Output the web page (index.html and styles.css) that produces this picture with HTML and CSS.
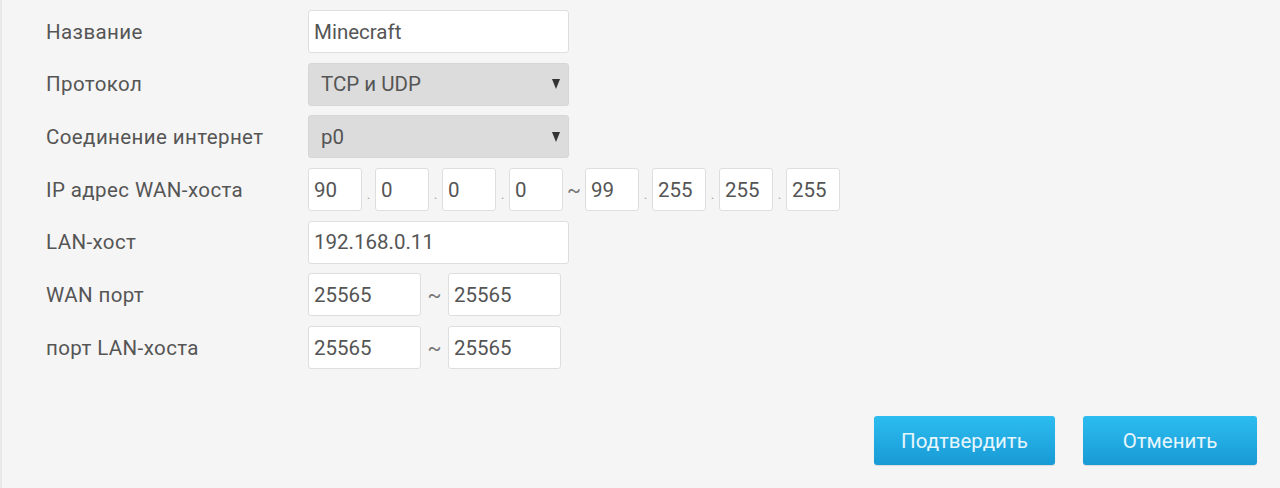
FILE: index.html
```html
<!DOCTYPE html>
<html lang="ru">
<head>
<meta charset="utf-8">
<link rel="stylesheet" href="styles.css">
</head>
<body>
<div class="panel">
  <div class="form">
    <div class="row">
      <div class="label">Название</div>
      <div class="field"><div class="input wide">Minecraft</div></div>
    </div>
    <div class="row">
      <div class="label">Протокол</div>
      <div class="field"><div class="select wide"><span>TCP и UDP</span><span class="arrow"></span></div></div>
    </div>
    <div class="row">
      <div class="label">Соединение интернет</div>
      <div class="field"><div class="select wide"><span>p0</span><span class="arrow"></span></div></div>
    </div>
    <div class="row">
      <div class="label">IP адрес WAN-хоста</div>
      <div class="field ip">
        <div class="input oct">90</div><span class="dot">.</span>
        <div class="input oct">0</div><span class="dot">.</span>
        <div class="input oct">0</div><span class="dot">.</span>
        <div class="input oct">0</div><span class="tilde ip-tilde">~</span>
        <div class="input oct">99</div><span class="dot">.</span>
        <div class="input oct">255</div><span class="dot">.</span>
        <div class="input oct">255</div><span class="dot">.</span>
        <div class="input oct">255</div>
      </div>
    </div>
    <div class="row">
      <div class="label">LAN-хост</div>
      <div class="field"><div class="input wide">192.168.0.11</div></div>
    </div>
    <div class="row">
      <div class="label">WAN порт</div>
      <div class="field">
        <div class="input port">25565</div><span class="tilde">~</span><div class="input port">25565</div>
      </div>
    </div>
    <div class="row">
      <div class="label">порт LAN-хоста</div>
      <div class="field">
        <div class="input port">25565</div><span class="tilde">~</span><div class="input port">25565</div>
      </div>
    </div>
  </div>
  <div class="actions">
    <button class="btn confirm">Подтвердить</button>
    <button class="btn cancel">Отменить</button>
  </div>
</div>
</body>
</html>
```
FILE: styles.css
```css
html, body {
  margin: 0;
  padding: 0;
  background: #f5f5f5;
}
body {
  width: 1280px;
  height: 488px;
  overflow: hidden;
  font-family: Roboto, "Noto Sans", sans-serif;
  font-size: 20.5px;
  color: #555;
}
.panel {
  height: 488px;
  box-sizing: border-box;
  border-left: 2px solid #e8e8e8;
  padding: 10px 23px 0 44px;
  display: flex;
  flex-direction: column;
}
.form {
  display: flex;
  flex-direction: column;
  gap: 9.7px;
}
.row {
  display: flex;
  align-items: center;
  height: 43px;
}
.label {
  width: 262px;
  flex: none;
  color: #555;
  letter-spacing: 0.4px;
}
.field {
  display: flex;
  align-items: center;
  height: 43px;
}
.input {
  box-sizing: border-box;
  height: 43px;
  background: #fff;
  border: 1px solid #dedede;
  border-radius: 3px;
  padding: 0 5px;
  display: flex;
  align-items: center;
  color: #555;
}
.wide { width: 261px; }
.oct { width: 54px; }
.port { width: 113px; }
.select {
  box-sizing: border-box;
  height: 43px;
  background: #dcdcdc;
  border: 1px solid #d6d6d6;
  border-radius: 3px;
  padding: 0 8px 0 12px;
  display: flex;
  align-items: center;
  justify-content: space-between;
  color: #555;
}
.arrow {
  width: 0;
  height: 0;
  border-left: 4.5px solid transparent;
  border-right: 4.5px solid transparent;
  border-top: 10px solid #333;
}
.dot {
  width: 13px;
  text-align: center;
  font-size: 14px;
  color: #aaa;
  align-self: center;
  padding-top: 8px;
}
.tilde {
  width: 27px;
  text-align: center;
  color: #777;
}
.ip-tilde { width: 22px; }
.actions {
  margin-top: auto;
  margin-bottom: 23px;
  display: flex;
  justify-content: flex-end;
  gap: 28px;
}
.btn {
  height: 49px;
  border: none;
  border-radius: 3px;
  background: linear-gradient(#2dbdf0, #189ad5);
  color: #e6f6fd;
  font-family: Roboto, "Noto Sans", sans-serif;
  font-size: 20.5px;
  box-shadow: 0 1px 1px rgba(0,0,0,0.1);
}
.confirm { width: 181px; }
.cancel { width: 174px; }
```
